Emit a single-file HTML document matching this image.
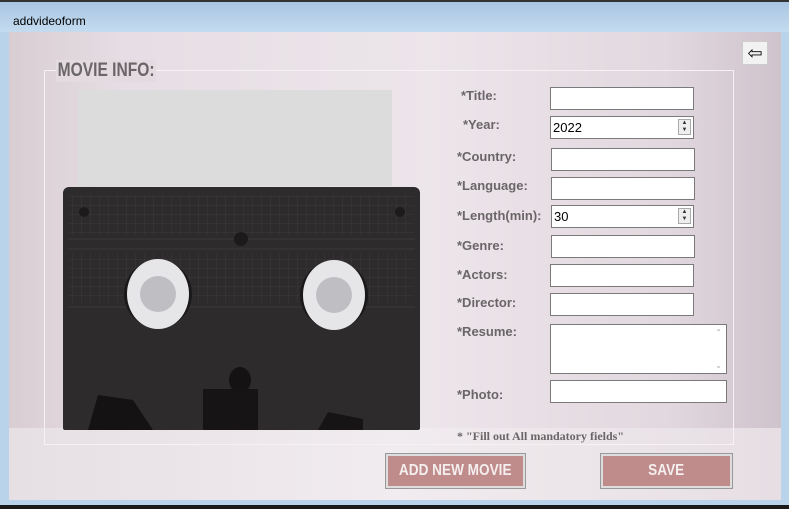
<!DOCTYPE html>
<html><head><style>
*{margin:0;padding:0;box-sizing:border-box}
body{width:789px;height:509px;overflow:hidden;background:#b9d3ea;font-family:"Liberation Sans",sans-serif;position:relative}
.top{position:absolute;left:0;top:0;width:789px;height:32px;background:linear-gradient(#a9c6e2,#c4dbef);border-top:2px solid #333}
.top span{position:absolute;left:13px;top:12px;font-size:12px;color:#000}
.main{position:absolute;left:9px;top:32px;width:772px;height:468px;background:linear-gradient(90deg,#d8cdd3 0%,#e6dee4 15%,#ece5ea 55%,#e2d8df 85%,#cfc3cc 100%)}
.floor{position:absolute;left:9px;top:428px;width:772px;height:72px;background:linear-gradient(90deg,#e6dfe4,#f1ecef 50%,#e6dee3)}
.bot{position:absolute;left:0;top:505px;width:789px;height:4px;background:#1a1a1a}
.grp{position:absolute;left:44px;top:70px;width:690px;height:375px;border:1px solid #f6f2f4}
.legend{position:absolute;left:56px;top:60px;font:bold 19px "Liberation Sans",sans-serif;color:#6a6667;background:#e4dbe1;padding:0 2px;transform:scaleX(0.82);transform-origin:left}
.gray{position:absolute;left:78px;top:90px;width:314px;height:96px;background:#dcdcdc}
.cas{position:absolute;left:63px;top:187px;width:357px;height:243px;background:#2e2b2d;border-radius:6px 6px 2px 2px}
.lbl{position:absolute;font-weight:bold;font-size:13px;color:#6a6668}
.in{position:absolute;background:#fff;border:1px solid #7a7a7a;font-size:13px;padding:3px 0 0 2px;color:#000}
.sp{position:absolute;right:2px;top:2px;width:13px;height:16px;border:1px solid #aaa;background:#eee;font-size:6px;line-height:7px;text-align:center;color:#333}
.btn{position:absolute;top:454px;height:34px;background:#bf8b8b;border:2px solid #ddd;outline:1px solid #999;color:#f4eeee;font:bold 16px "Liberation Sans",sans-serif;text-align:center;line-height:30px;white-space:nowrap;overflow:hidden}
.btn span{display:inline-block;transform:scaleX(0.85)}
.note{position:absolute;left:457px;top:429px;font:bold 12px "Liberation Serif",serif;color:#6a6668}
.back{position:absolute;left:742px;top:41px;width:26px;height:24px;background:#f2f2f2;border:1px solid #ccc;font-size:18px;line-height:22px;text-align:center}
</style></head><body>
<div class="top"><span>addvideoform</span></div>
<div class="main"></div>
<div class="floor"></div>
<div class="grp"></div>
<div class="legend">MOVIE INFO:</div>
<div class="gray"></div>
<div class="cas">
<svg width="357" height="243" style="position:absolute;left:0;top:0">
<defs><pattern id="g" width="9" height="9" patternUnits="userSpaceOnUse"><path d="M0 0H9M0 0V9" stroke="#3d393b" stroke-width="1"/></pattern></defs>
<rect x="6" y="8" width="345" height="40" fill="url(#g)"/>
<rect x="6" y="66" width="345" height="50" fill="url(#g)"/>
<g stroke="#3c393b" stroke-width="1">
<line x1="5" y1="52" x2="352" y2="52"/><line x1="5" y1="62" x2="352" y2="62"/><line x1="5" y1="120" x2="352" y2="120"/>
</g>
<circle cx="21" cy="25" r="5" fill="#1c1a1b"/><circle cx="337" cy="25" r="5" fill="#1c1a1b"/>
<circle cx="178" cy="52" r="7" fill="#1c1a1b"/>
<circle cx="95" cy="107" r="34" fill="#1a1819"/>
<ellipse cx="95" cy="107" rx="31" ry="35" fill="#e6e6e8"/>
<circle cx="95" cy="107" r="18" fill="#bfbfc3"/>
<circle cx="271" cy="108" r="34" fill="#1a1819"/>
<ellipse cx="271" cy="108" rx="31" ry="35" fill="#e6e6e8"/>
<circle cx="271" cy="108" r="18" fill="#bfbfc3"/>
<ellipse cx="177" cy="193" rx="11" ry="13" fill="#141213"/>
<path d="M25 243 L35 208 L70 213 L90 243Z" fill="#141213"/>
<rect x="140" y="202" width="55" height="41" fill="#161415"/>
<path d="M255 243 L265 225 L300 232 L300 243Z" fill="#161415"/>
</svg></div>
<div class="back">⇦</div>
<div class="lbl" style="left:461px;top:88px">*Title:</div>
<div class="lbl" style="left:463px;top:117px">*Year:</div>
<div class="lbl" style="left:457px;top:149px">*Country:</div>
<div class="lbl" style="left:457px;top:178px">*Language:</div>
<div class="lbl" style="left:457px;top:208px">*Length(min):</div>
<div class="lbl" style="left:457px;top:238px">*Genre:</div>
<div class="lbl" style="left:457px;top:267px">*Actors:</div>
<div class="lbl" style="left:457px;top:295px">*Director:</div>
<div class="lbl" style="left:457px;top:324px">*Resume:</div>
<div class="lbl" style="left:457px;top:387px">*Photo:</div>
<div class="in" style="left:550px;top:87px;width:144px;height:23px"></div>
<div class="in" style="left:550px;top:116px;width:144px;height:23px">2022<div class="sp">▲<br>▼</div></div>
<div class="in" style="left:551px;top:148px;width:144px;height:23px"></div>
<div class="in" style="left:551px;top:177px;width:144px;height:23px"></div>
<div class="in" style="left:551px;top:205px;width:143px;height:23px">30<div class="sp">▲<br>▼</div></div>
<div class="in" style="left:551px;top:235px;width:144px;height:23px"></div>
<div class="in" style="left:550px;top:264px;width:144px;height:23px"></div>
<div class="in" style="left:550px;top:293px;width:144px;height:23px"></div>
<div class="in" style="left:550px;top:324px;width:177px;height:50px"><span style="position:absolute;right:4px;top:3px;font-size:8px;color:#aaa">⌃</span><span style="position:absolute;right:4px;bottom:3px;font-size:8px;color:#aaa">⌄</span></div>
<div class="in" style="left:550px;top:380px;width:177px;height:23px"></div>
<div class="note">* "Fill out All mandatory fields"</div>
<div class="btn" style="left:386px;width:139px"><span>ADD NEW MOVIE</span></div>
<div class="btn" style="left:601px;width:131px"><span>SAVE</span></div>
<div class="bot"></div>
</body></html>
